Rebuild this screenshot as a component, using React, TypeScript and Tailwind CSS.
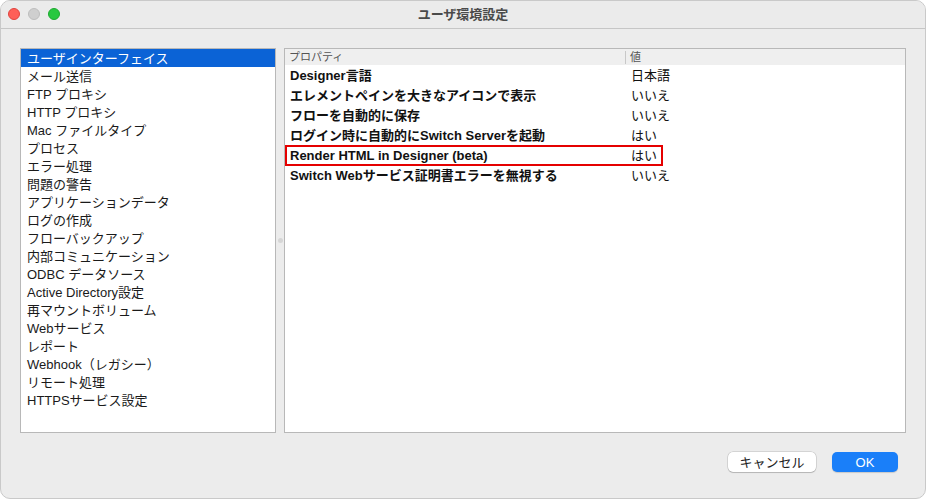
import React from 'react';

const categories = [
  'ユーザインターフェイス',
  'メール送信',
  'FTP プロキシ',
  'HTTP プロキシ',
  'Mac ファイルタイプ',
  'プロセス',
  'エラー処理',
  '問題の警告',
  'アプリケーションデータ',
  'ログの作成',
  'フローバックアップ',
  '内部コミュニケーション',
  'ODBC データソース',
  'Active Directory設定',
  '再マウントボリューム',
  'Webサービス',
  'レポート',
  'Webhook（レガシー）',
  'リモート処理',
  'HTTPSサービス設定',
];

const properties = [
  { name: 'Designer言語', value: '日本語' },
  { name: 'エレメントペインを大きなアイコンで表示', value: 'いいえ' },
  { name: 'フローを自動的に保存', value: 'いいえ' },
  { name: 'ログイン時に自動的にSwitch Serverを起動', value: 'はい' },
  { name: 'Render HTML in Designer (beta)', value: 'はい', marked: true },
  { name: 'Switch Webサービス証明書エラーを無視する', value: 'いいえ' },
];

const font = { fontFamily: '"Liberation Sans", "Noto Sans CJK JP", sans-serif' };

export default function App() {
  return (
    <div className="w-[926px] h-[499px] bg-white" style={font}>
      <div className="w-full h-full bg-[#ececec] rounded-[10px] overflow-hidden border border-[#c9c9c9] flex flex-col">
        {/* Title bar */}
        <div className="relative h-[28px] shrink-0 bg-[#ebebeb] border-b border-[#c6c6c6] flex items-center justify-center">
          <div className="absolute left-[7px] top-[7px] flex gap-[8px]">
            <span className="w-[12px] h-[12px] rounded-full bg-[#fe5f57] border border-[#e0443e]" />
            <span className="w-[12px] h-[12px] rounded-full bg-[#cfcfcf] border border-[#bdbdbd]" />
            <span className="w-[12px] h-[12px] rounded-full bg-[#28c840] border border-[#1eaa30]" />
          </div>
          <span className="text-[13px] font-bold text-[#4a4a4a] leading-none">ユーザ環境設定</span>
        </div>

        {/* Body */}
        <div className="flex-1 flex flex-col pt-[19px] px-[19px]">
          <div className="flex h-[385px]">
            {/* Category list */}
            <div className="w-[256px] h-full bg-white border border-[#b8b8b8]">
              {categories.map((c, i) => (
                <div
                  key={c}
                  className={
                    i === 0
                      ? 'h-[18px] pl-[6px] flex items-center text-[13px] leading-none bg-[#0b63d6] text-white'
                      : 'h-[18px] pl-[6px] flex items-center text-[13px] leading-none text-[#1a1a1a]'
                  }
                >
                  {c}
                </div>
              ))}
            </div>

            {/* Splitter */}
            <div className="w-[8px] flex items-center justify-center">
              <span className="w-[5px] h-[5px] rounded-full bg-[#d6d6d6]" />
            </div>

            {/* Property table */}
            <div className="flex-1 h-full bg-white border border-[#b8b8b8]">
              <div className="h-[16px] bg-[#efefef] flex items-center text-[11px] leading-none text-[#555]">
                <div className="w-[340px] pl-[4px]">プロパティ</div>
                <div className="h-[13px] border-l border-[#c8c8c8] pl-[4px] flex items-center">値</div>
              </div>
              {properties.map((p) => (
                <div key={p.name} className="relative h-[20px] flex items-center text-[13px] leading-none text-[#111]">
                  <div className="w-[346px] pl-[5px] font-bold">{p.name}</div>
                  <div>{p.value}</div>
                  {p.marked && (
                    <div className="absolute left-0 top-0 w-[378px] h-[21px] border-2 border-[#e50000]" />
                  )}
                </div>
              ))}
            </div>
          </div>

          {/* Buttons */}
          <div className="flex justify-end gap-[16px] mt-[19px] pr-[8px]">
            <button className="w-[88px] h-[20px] rounded-[5px] bg-white text-[13px] leading-none text-[#222] shadow-[0_0_0_0.5px_rgba(0,0,0,0.2),0_1px_1px_rgba(0,0,0,0.15)]">
              キャンセル
            </button>
            <button className="w-[66px] h-[20px] rounded-[5px] bg-[#1a7ff9] text-[13px] leading-none text-white shadow-[0_1px_1px_rgba(0,0,0,0.15)]">
              OK
            </button>
          </div>
        </div>
      </div>
    </div>
  );
}
